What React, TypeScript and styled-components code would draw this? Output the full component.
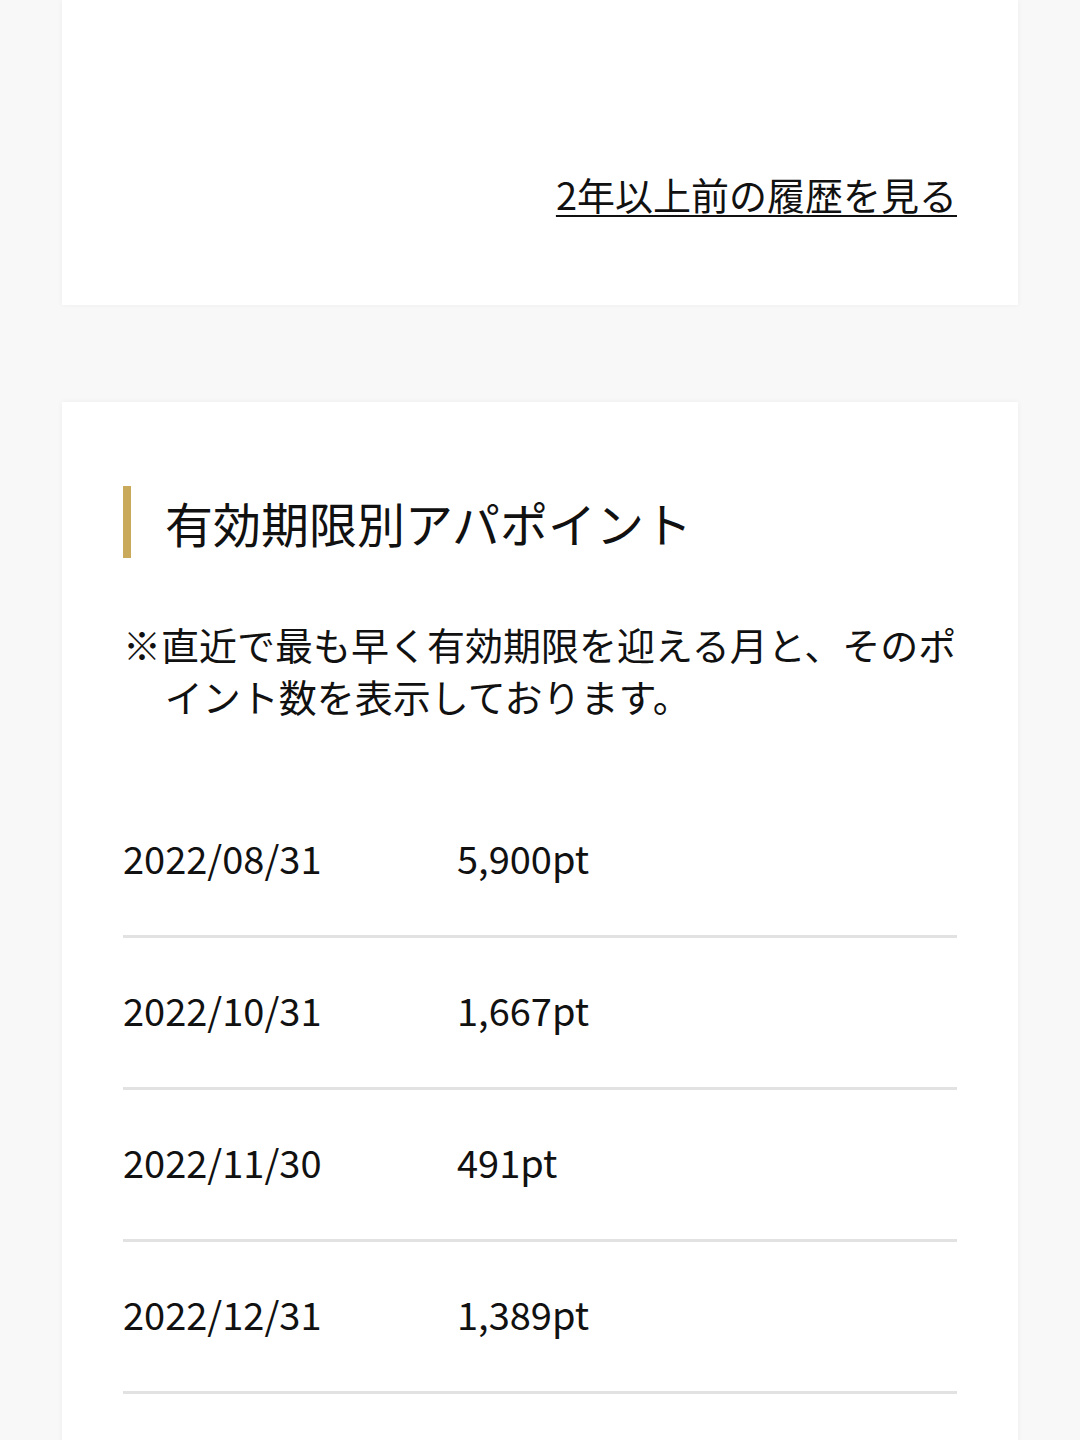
import React from 'react';
import styled, { createGlobalStyle } from 'styled-components';

const GlobalStyle = createGlobalStyle`
  html, body {
    margin: 0;
    padding: 0;
    background: #f8f8f8;
    font-family: "Noto Sans CJK JP", "Noto Sans", sans-serif;
    color: #111;
  }
`;

const Page = styled.div`
  padding: 0 62px 120px;
  display: flex;
  flex-direction: column;
  gap: 97px;
`;

const Card = styled.section<{ $top?: number; $bottom?: number }>`
  background: #fff;
  box-shadow: 0 0 6px rgba(0, 0, 0, 0.05);
  padding: ${p => p.$top ?? 84}px 61px ${p => p.$bottom ?? 0}px 61px;
`;

const LinkRow = styled.div`
  display: flex;
  justify-content: flex-end;
`;

const HistoryLink = styled.a`
  font-size: 38px;
  line-height: 52px;
  color: #111;
  text-decoration: underline;
  text-decoration-thickness: 2px;
  text-underline-offset: 5px;
  cursor: pointer;
`;

const Heading = styled.h2`
  margin: 0;
  display: flex;
  align-items: center;
  gap: 34px;
  font-size: 48px;
  font-weight: 400;
  line-height: 72px;
  &::before {
    content: '';
    width: 8px;
    height: 72px;
    background: #c9aa5b;
    flex-shrink: 0;
  }
`;

const Note = styled.p`
  margin: 60px -3px 0 0;
  font-size: 38px;
  line-height: 52px;
  padding-left: 1.1em;
  text-indent: -1.1em;
`;

const List = styled.ul`
  list-style: none;
  margin: 64px 0 0;
  padding: 0;
`;

const Row = styled.li`
  display: grid;
  grid-template-columns: 334px 1fr;
  align-items: center;
  height: 143px;
  padding-bottom: 6px;
  font-size: 38px;
  border-bottom: 3px solid #e2e2e2;
`;

const rows = [
  { date: '2022/08/31', pt: '5,900pt' },
  { date: '2022/10/31', pt: '1,667pt' },
  { date: '2022/11/30', pt: '491pt' },
  { date: '2022/12/31', pt: '1,389pt' },
];

export default function App() {
  return (
    <>
      <GlobalStyle />
      <Page>
        <Card $top={168} $bottom={85}>
          <LinkRow>
            <HistoryLink>2年以上前の履歴を見る</HistoryLink>
          </LinkRow>
        </Card>
        <Card $bottom={60}>
          <Heading>有効期限別アパポイント</Heading>
          <Note>※直近で最も早く有効期限を迎える月と、そのポイント数を表示しております。</Note>
          <List>
            {rows.map(r => (
              <Row key={r.date}>
                <span>{r.date}</span>
                <span>{r.pt}</span>
              </Row>
            ))}
          </List>
        </Card>
      </Page>
    </>
  );
}
